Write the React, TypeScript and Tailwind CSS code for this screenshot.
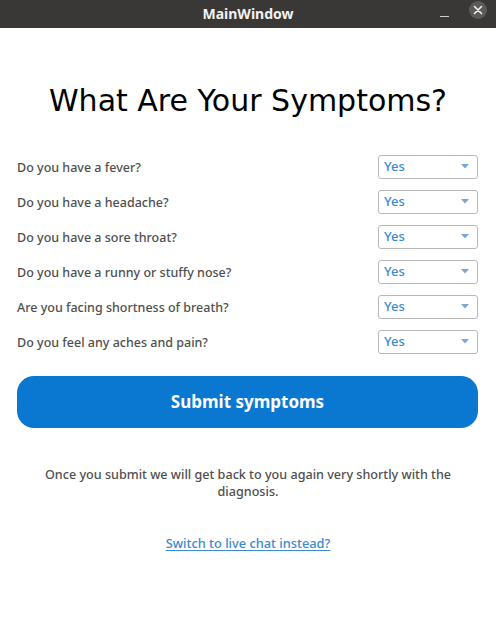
import React from "react";

const questions = [
  "Do you have a fever?",
  "Do you have a headache?",
  "Do you have a sore throat?",
  "Do you have a runny or stuffy nose?",
  "Are you facing shortness of breath?",
  "Do you feel any aches and pain?",
];

function Combo() {
  return (
    <div className="w-[100px] h-[24px] rounded-[3px] border border-[#b9b9b9] bg-white flex items-center justify-between pl-[5px] pr-[8px]">
      <span className="text-[13px] font-medium text-[#3b8ad2] leading-none">Yes</span>
      <svg width="8" height="5" viewBox="0 0 8 5">
        <path d="M0 0 L8 0 L4 4.5 Z" fill="#7aa8d4" />
      </svg>
    </div>
  );
}

export default function App() {
  return (
    <div
      className="w-[496px] h-[625px] bg-white flex flex-col"
      style={{ fontFamily: '"Noto Sans", "Open Sans", sans-serif' }}
    >
      <div className="h-[28px] bg-[#3a3836] relative flex items-center justify-center shrink-0">
        <span className="text-[14px] font-bold text-[#f2f2f2] leading-none">MainWindow</span>
        <div className="absolute right-[9px] top-0 h-[28px] flex items-center gap-[20px]">
          <div className="w-[9px] h-[1px] bg-[#cfcfcf] mt-[4px]" />
          <div className="w-[18px] h-[18px] rounded-full bg-[#5b5a58] flex items-center justify-center mb-[8px]">
            <svg width="10" height="10" viewBox="0 0 10 10">
              <path d="M1.5 1.5 L8.5 8.5 M8.5 1.5 L1.5 8.5" stroke="#f2f2f2" strokeWidth="1.6" strokeLinecap="round" />
            </svg>
          </div>
        </div>
      </div>

      <h1
        className="mt-[58px] h-[30px] leading-[30px] text-[30px] text-center text-black font-normal"
        style={{ fontFamily: '"DejaVu Sans", sans-serif' }}
      >
        What Are Your Symptoms?
      </h1>

      <div className="mt-[33px] flex flex-col pl-[17px] pr-[18px]">
        {questions.map((q) => (
          <div key={q} className="h-[35px] flex items-center justify-between">
            <span className="text-[12.5px] leading-[17px] pt-[2px] font-medium text-[#4f4f4f]">{q}</span>
            <Combo />
          </div>
        ))}
      </div>

      <div className="mt-[17px] px-[17px] pr-[18px]">
        <button className="w-full h-[52px] rounded-[17px] bg-[#0a77d0] text-white text-[17px] font-bold">
          Submit symptoms
        </button>
      </div>

      <p className="mt-[38px] text-center text-[12.6px] leading-[17px] font-medium text-[#4f4f4f]">
        Once you submit we will get back to you again very shortly with the
        <br />
        diagnosis.
      </p>

      <div className="mt-[34px] text-center leading-[17px]">
        <a className="text-[12.8px] font-medium text-[#3b8ad2] underline underline-offset-2 cursor-pointer">
          Switch to live chat instead?
        </a>
      </div>
    </div>
  );
}
